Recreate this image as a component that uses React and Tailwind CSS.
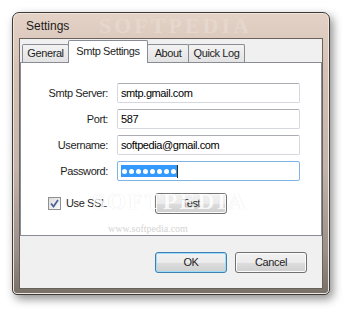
import React from 'react'

const font = { fontFamily: '"Liberation Sans", Arial, sans-serif' }

function Tab({ label, width, active, first }) {
    if (active) {
        return (
            <div className={`relative z-10 -ml-[1px] -mb-[1px] h-[23px] ${width} bg-white border border-b-0 border-[#898c95] rounded-t-[2px] flex items-center justify-center pb-[2px]`}>
                {label}
            </div>
        )
    }
    return (
        <div className={`${first ? '' : '-ml-[1px]'} h-[18px] ${width} border border-b-0 border-[#898c95] rounded-t-[2px] bg-gradient-to-b from-[#f3f3f3] to-[#e3e3e3] flex items-center justify-center`}>
            {label}
        </div>
    )
}

function Field({ label, value, focused }) {
    return (
        <>
            <div className="h-[20px] flex items-center justify-end text-[#1e1e1e]">{label}</div>
            <div className={`h-[20px] w-[183px] rounded-[2px] border bg-white flex items-center pl-[3px] ${focused ? 'border-[#7fb4e4]' : 'border-[#d5d8de] border-t-[#abadb3]'}`}>
                {value}
            </div>
        </>
    )
}

function Button({ children, primary, className = '' }) {
    return (
        <button
            className={`h-[21px] w-[72px] rounded-[3px] border text-[#1e1e1e] bg-[linear-gradient(#f2f2f2_0%,#ebebeb_50%,#dddddd_51%,#cfcfcf_100%)] ${primary ? 'border-[#3c7fb1] shadow-[inset_0_0_0_1px_#9fdcf8]' : 'border-[#707070] shadow-[inset_0_0_0_1px_#fbfbfb]'} ${className}`}
        >
            {children}
        </button>
    )
}

export default function App() {
    return (
        <div className="w-[350px] h-[316px] bg-white pl-[12px] pt-[12px] text-[11px] tracking-[-0.4px]" style={font}>
            <div className="relative w-[318px] h-[283px] rounded-t-[7px] rounded-b-[5px] border border-[#3f3936] bg-[linear-gradient(#e4d2c7_0%,#d5c1b5_20%,#c4b4ab_55%,#9a8f89_85%,#777069_100%)] shadow-[inset_0_0_0_1px_#efe6e0,3px_4px_10px_rgba(0,0,0,0.45)] flex flex-col px-[6px] pb-[5px]">
                {/* title bar */}
                <div className="relative h-[25px] flex items-center pl-[7px] pt-[1px] text-[12px] tracking-normal text-[#1b1b1b]">
                    <span className="absolute left-[80px] top-[1px] text-[22px] leading-[24px] font-bold tracking-[3px] text-[#e8dbd3] opacity-70 pointer-events-none" style={{ fontFamily: '"Liberation Serif", serif' }}>SOFTPEDIA</span>
                    <span className="relative">Settings</span>
                </div>

                {/* client area */}
                <div className="relative flex-1 border border-[#6b615b] bg-[#f0f0f0] flex flex-col">
                    {/* tabs */}
                    <div className="h-[23px] flex items-end pl-[2px] text-[#1e1e1e]">
                        <Tab label="General" width="w-[47px]" first />
                        <Tab label="Smtp Settings" width="w-[80px]" active />
                        <Tab label="About" width="w-[42px]" />
                        <Tab label="Quick Log" width="w-[57px]" />
                    </div>

                    {/* panel */}
                    <div className="w-[302px] h-[174px] border border-[#898c95] bg-white flex flex-col">
                        <div className="grid grid-cols-[87px_183px] gap-x-[9px] gap-y-[6px] pt-[20px]">
                            <Field label="Smtp Server:" value="smtp.gmail.com" />
                            <Field label="Port:" value="587" />
                            <Field label="Username:" value="softpedia@gmail.com" />
                            <Field
                                label="Password:"
                                focused
                                value={
                                    <div className="flex items-center">
                                        <div className="h-[12px] bg-[#3399ff] flex items-center gap-[2px] px-[1px]">
                                            {[0, 1, 2, 3, 4, 5, 6, 7].map((i) => (
                                                <span key={i} className="w-[5px] h-[5px] rounded-full bg-white" />
                                            ))}
                                        </div>
                                        <span className="w-[1px] h-[13px] bg-[#3a2a10]" />
                                    </div>
                                }
                            />
                        </div>

                        <div className="flex items-center pl-[27px] mt-[12px]">
                            <div className="w-[107px] flex items-center">
                                <span className="w-[13px] h-[13px] border border-[#8e8f8f] bg-gradient-to-br from-[#dcdcdc] to-[#fbfbfb] flex items-center justify-center">
                                    <svg width="9" height="9" viewBox="0 0 9 9">
                                        <path d="M1 4.5 L3.5 7.5 L8 1" fill="none" stroke="#4a5f97" strokeWidth="1.7" />
                                    </svg>
                                </span>
                                <span className="ml-[5px] text-[#1e1e1e]">Use SSL</span>
                            </div>
                            <Button>Test</Button>
                        </div>
                    </div>

                    {/* bottom buttons */}
                    <div className="flex pl-[135px] mt-[16px]">
                        <Button primary>OK</Button>
                        <Button className="ml-[8px]">Cancel</Button>
                    </div>

                    {/* watermark */}
                    <span className="absolute left-[72px] top-[149px] text-[24px] leading-[26px] font-bold tracking-[2px] text-white opacity-80 pointer-events-none [text-shadow:0_0_1px_#d6d6d6]" style={{ fontFamily: '"Liberation Serif", serif' }}>SOFTPEDIA</span>
                    <span className="absolute left-[88px] top-[184px] text-[10px] leading-[12px] tracking-normal text-[#d4d4d4] pointer-events-none" style={{ fontFamily: '"Liberation Serif", serif' }}>www.softpedia.com</span>
                </div>
            </div>
        </div>
    )
}
